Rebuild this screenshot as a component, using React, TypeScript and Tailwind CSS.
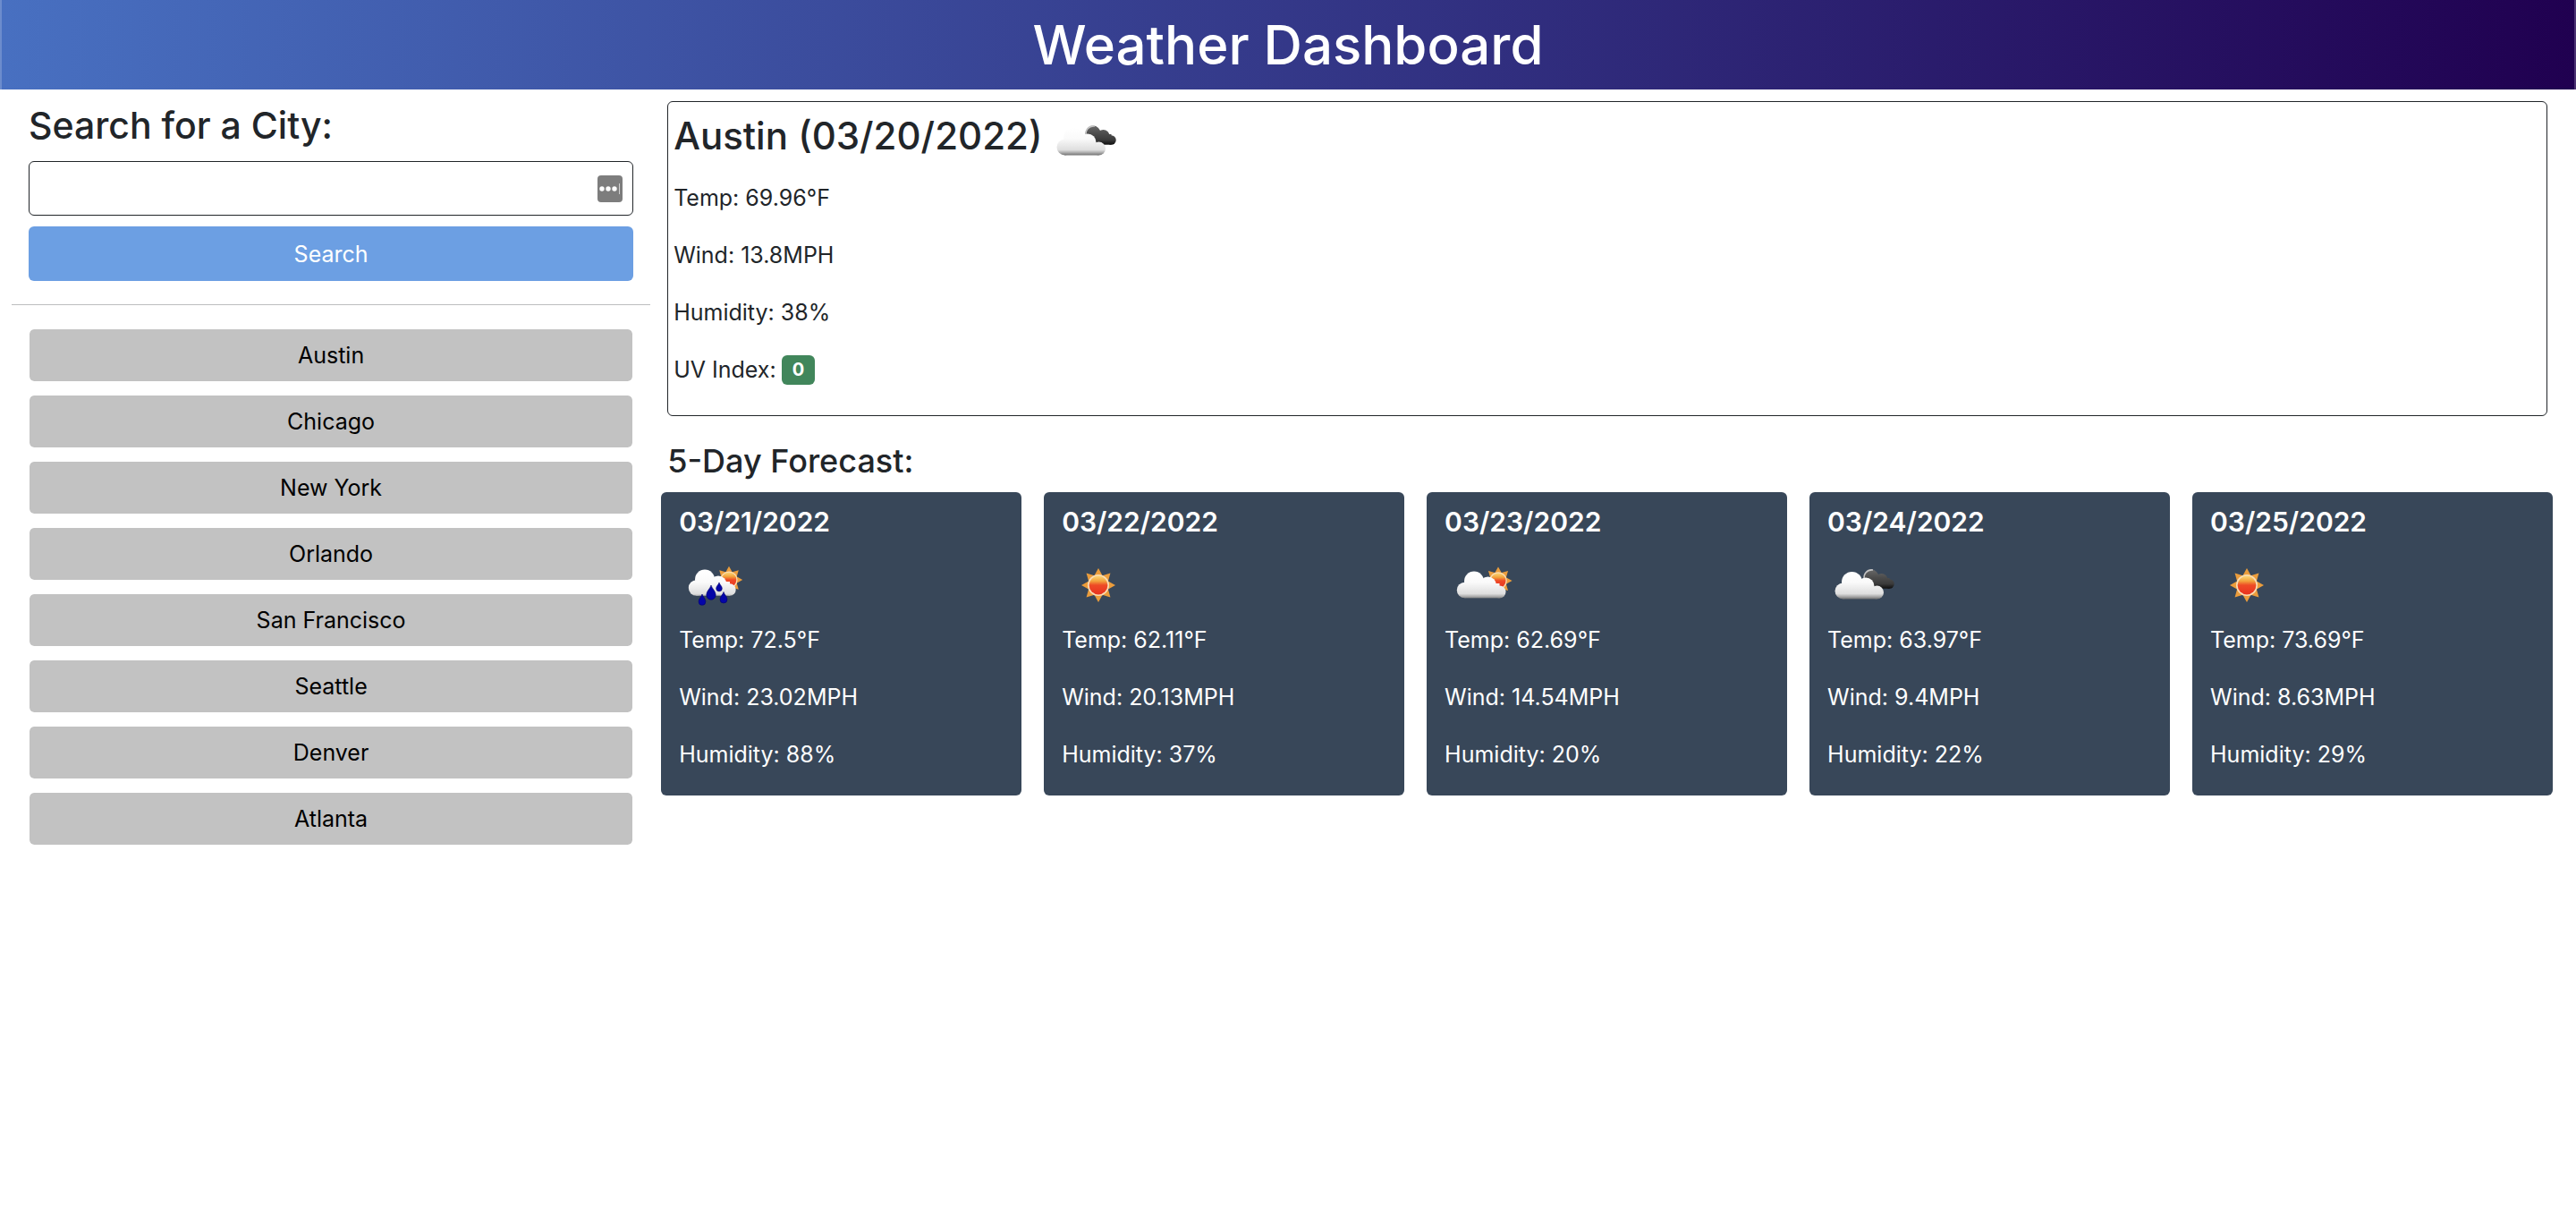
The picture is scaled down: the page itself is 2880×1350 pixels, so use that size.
import { useId, useState } from "react";
import type { FormEvent } from "react";

type IconKind = "rain" | "sun" | "few" | "broken";

const cities = ["Austin", "Chicago", "New York", "Orlando", "San Francisco", "Seattle", "Denver", "Atlanta"];

const forecast: { date: string; icon: IconKind; label: string; temp: string; wind: string; humidity: string }[] = [
  { date: "03/21/2022", icon: "rain", label: "Rain", temp: "72.5", wind: "23.02", humidity: "88" },
  { date: "03/22/2022", icon: "sun", label: "Clear sky", temp: "62.11", wind: "20.13", humidity: "37" },
  { date: "03/23/2022", icon: "few", label: "Few clouds", temp: "62.69", wind: "14.54", humidity: "20" },
  { date: "03/24/2022", icon: "broken", label: "Broken clouds", temp: "63.97", wind: "9.4", humidity: "22" },
  { date: "03/25/2022", icon: "sun", label: "Clear sky", temp: "73.69", wind: "8.63", humidity: "29" },
];

const rays = [0, 45, 90, 135, 180, 225, 270, 315];

function Sun({ x, y, scale, fill }: { x: number; y: number; scale: number; fill: string }) {
  return (
    <g transform={`translate(${x} ${y}) scale(${scale})`}>
      {rays.map((angle) => (
        <path key={angle} d="M-5 -10 L0 -19 L5 -10 Z" fill="#eb9d3c" transform={`rotate(${angle})`} />
      ))}
      <circle r="12" fill="#f9dcb4" />
      <circle r="10.4" fill={fill} />
    </g>
  );
}

function WeatherIcon({ kind, label }: { kind: IconKind; label: string }) {
  const id = useId();
  const sun = `${id}sun`;
  const cloud = `${id}cloud`;
  const dark = `${id}dark`;
  const sunFill = `url(#${sun})`;
  const cloudFill = `url(#${cloud})`;
  return (
    <svg viewBox="0 0 80 80" className="size-20 shrink-0" role="img" aria-label={label}>
      <defs>
        <linearGradient id={sun} x1="0" y1="0" x2="0" y2="1">
          <stop offset="0" stopColor="#fbd777" />
          <stop offset="0.28" stopColor="#f2a23c" />
          <stop offset="0.5" stopColor="#ee4a26" />
          <stop offset="1" stopColor="#e8331f" />
        </linearGradient>
        <linearGradient id={cloud} gradientUnits="userSpaceOnUse" x1="0" y1="24" x2="0" y2="56">
          <stop offset="0" stopColor="#ffffff" />
          <stop offset="0.4" stopColor="#fafafa" />
          <stop offset="0.8" stopColor="#dedede" />
          <stop offset="0.9" stopColor="#a8a8a8" />
          <stop offset="1" stopColor="#666666" />
        </linearGradient>
        <linearGradient id={dark} gradientUnits="userSpaceOnUse" x1="0" y1="22" x2="0" y2="44">
          <stop offset="0" stopColor="#6a6a6a" />
          <stop offset="0.4" stopColor="#4e4e4e" />
          <stop offset="0.75" stopColor="#3a3a3a" />
          <stop offset="1" stopColor="#0c0c0c" />
        </linearGradient>
      </defs>
      {kind === "sun" && <Sun x={41} y={40} scale={1} fill={sunFill} />}
      {kind === "broken" && (
        <>
          <g fill={`url(#${dark})`}>
            <circle cx="49" cy="31" r="8.5" />
            <circle cx="60.5" cy="34" r="7" />
            <circle cx="69.5" cy="38.5" r="5.2" />
            <rect x="46" y="32" width="23.5" height="11.7" />
          </g>
          <path d="M41.5 34 A8.5 8.5 0 0 1 51 23" fill="none" stroke="#c4c4c4" strokeWidth="1.6" />
          <g fill={cloudFill}>
            <circle cx="17.5" cy="46.5" r="9" />
            <circle cx="27.5" cy="36.5" r="11.5" />
            <circle cx="43" cy="41" r="9.5" />
            <circle cx="55.5" cy="48" r="7.5" />
            <rect x="17.5" y="42" width="38" height="13.5" />
          </g>
        </>
      )}
      {kind === "few" && (
        <>
          <Sun x={60} y={35} scale={0.82} fill={sunFill} />
          <g fill={cloudFill}>
            <circle cx="22.5" cy="45.5" r="8.7" />
            <circle cx="33" cy="35.5" r="11" />
            <circle cx="48.5" cy="40" r="9.5" />
            <circle cx="61.5" cy="47.5" r="7" />
            <rect x="22.5" y="38" width="39" height="16.4" />
          </g>
        </>
      )}
      {kind === "rain" && (
        <>
          <Sun x={56} y={34} scale={0.8} fill={sunFill} />
          <g fill={cloudFill}>
            <circle cx="19.5" cy="43" r="8.7" />
            <circle cx="29" cy="33.5" r="11" />
            <circle cx="44" cy="39" r="9.5" />
            <circle cx="57" cy="45" r="6.7" />
            <rect x="19.5" y="36" width="37.5" height="15.7" />
          </g>
          <g fill="#0505a8" stroke="#03036a" strokeWidth="0.6">
            <path d="M36 40 C37 44 41.2 46.5 41.2 51 A5.2 5.2 0 0 1 30.8 51 C30.8 46.5 35 44 36 40 Z" />
            <path d="M45 37 C45.6 39.5 48.3 41 48.3 43.6 A3.3 3.3 0 0 1 41.7 43.6 C41.7 41 44.4 39.5 45 37 Z" />
            <path d="M26 50 C26.7 53 29.9 55 29.9 58.4 A3.9 3.9 0 0 1 22.1 58.4 C22.1 55 25.3 53 26 50 Z" />
            <path d="M50 47.5 C50.7 50.5 54 52.5 54 56 A4 4 0 0 1 46 56 C46 52.5 49.3 50.5 50 47.5 Z" />
          </g>
        </>
      )}
    </svg>
  );
}

export default function App() {
  const [query, setQuery] = useState("");
  const [city, setCity] = useState("Austin");

  const search = (event: FormEvent) => {
    event.preventDefault();
    if (query.trim()) setCity(query.trim());
  };

  return (
    <div className="min-h-screen bg-white font-[Inter,sans-serif] text-[25px] leading-[38px] text-[#212529]">
      <header className="border-x-2 border-white/20 bg-linear-to-r/srgb from-[#4870c1] to-[#200050] bg-origin-border py-3 text-center">
        <h1 className="text-[60px] leading-[76px] font-medium text-white">Weather Dashboard</h1>
      </header>

      <div className="flex items-start">
        <aside className="w-[25.7%] shrink-0 px-[13px] pt-3">
          <form onSubmit={search} className="flex flex-col gap-3 px-[19px]">
            <label htmlFor="city" className="text-[41px] leading-[56px] font-medium">
              Search for a City:
            </label>
            <div className="relative">
              <input
                id="city"
                type="text"
                value={query}
                onChange={(event) => setQuery(event.target.value)}
                className="block h-[61px] w-full rounded-md border border-[#212529] bg-white pr-14 pl-5 outline-none"
              />
              <svg viewBox="0 0 28 30" className="absolute top-4 right-3 h-[30px] w-7" aria-hidden="true">
                <rect width="28" height="30" rx="4" fill="#7d7d7d" />
                <circle cx="5" cy="15" r="2.7" fill="#fff" />
                <circle cx="12" cy="15" r="2.7" fill="#fff" />
                <circle cx="19" cy="15" r="2.7" fill="#fff" />
                <path d="M24.5 9 V21" stroke="#d0d0d0" strokeWidth="1" />
              </svg>
            </div>
            <button type="submit" className="h-[61px] rounded-md bg-[#6c9fe3] text-white">
              Search
            </button>
          </form>
          <hr className="mt-[26px] mb-[26px] border-[#bcbebf]" />
          <div className="flex flex-col gap-[14px] px-[19px]">
            {cities.map((name) => (
              <button
                key={name}
                type="button"
                onClick={() => setCity(name)}
                className="h-[60px] rounded-md border border-white bg-[#c2c2c2] bg-clip-padding text-black"
              >
                {name}
              </button>
            ))}
          </div>
        </aside>

        <main className="min-w-0 flex-1 pt-[13px] pr-[26px]">
          <section className="mx-[6px] rounded-md border border-[#212529] px-[6px] pt-1 pb-8">
            <div className="flex items-center gap-2">
              <h2 className="pb-3 text-[42px] leading-[56px] font-medium">{city} (03/20/2022)</h2>
              <WeatherIcon kind="broken" label="Broken clouds" />
            </div>
            <div className="mt-1 flex flex-col gap-[26px]">
              <p>Temp: 69.96°F</p>
              <p>Wind: 13.8MPH</p>
              <p>Humidity: 38%</p>
              <p className="flex items-center gap-[6px]">
                UV Index:
                <span className="rounded-md bg-[#41865b] px-3 text-[20px] leading-[33px] font-bold text-white">0</span>
              </p>
            </div>
          </section>

          <h3 className="mt-[27px] ml-[6px] text-[36px] leading-[46px] font-medium">5-Day Forecast:</h3>
          <div className="mt-3 -ml-px grid grid-cols-5 gap-[25px]">
            {forecast.map((day) => (
              <article key={day.date} className="rounded-md bg-[#384759] px-5 pt-[14px] pb-[27px] text-white">
                <h4 className="text-[30px] leading-[38px] font-semibold">{day.date}</h4>
                <div className="mt-3 mb-[2px] flex">
                  <WeatherIcon kind={day.icon} label={day.label} />
                </div>
                <div className="flex flex-col gap-[26px]">
                  <p>Temp: {day.temp}°F</p>
                  <p>Wind: {day.wind}MPH</p>
                  <p>Humidity: {day.humidity}%</p>
                </div>
              </article>
            ))}
          </div>
        </main>
      </div>
    </div>
  );
}
